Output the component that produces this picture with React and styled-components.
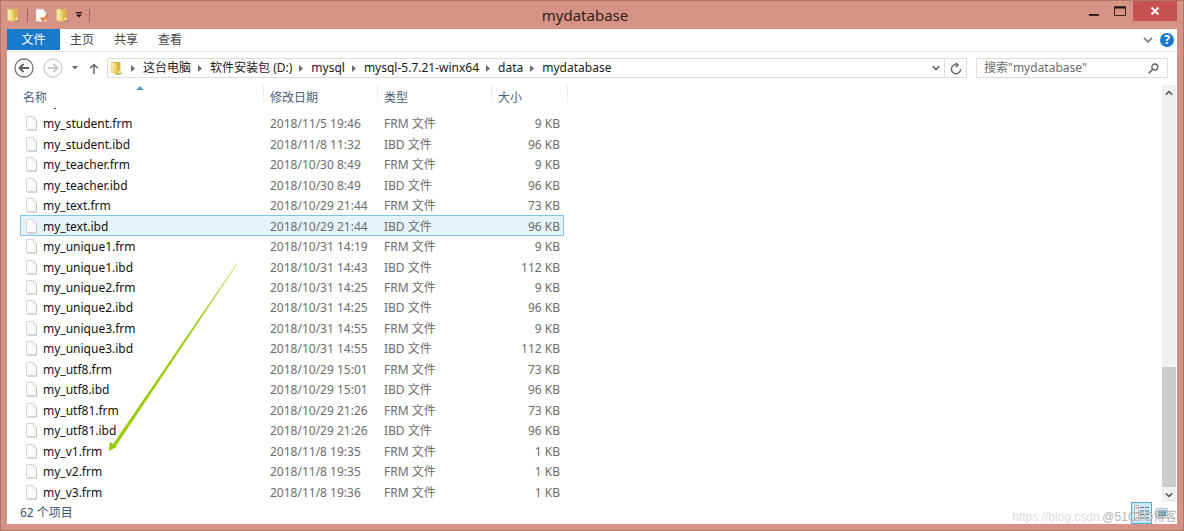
import React from 'react'
import styled, { createGlobalStyle } from 'styled-components'

const files = [
    ['my_student.frm', '2018/11/5 19:46', 'FRM 文件', '9 KB'],
    ['my_student.ibd', '2018/11/8 11:32', 'IBD 文件', '96 KB'],
    ['my_teacher.frm', '2018/10/30 8:49', 'FRM 文件', '9 KB'],
    ['my_teacher.ibd', '2018/10/30 8:49', 'IBD 文件', '96 KB'],
    ['my_text.frm', '2018/10/29 21:44', 'FRM 文件', '73 KB'],
    ['my_text.ibd', '2018/10/29 21:44', 'IBD 文件', '96 KB'],
    ['my_unique1.frm', '2018/10/31 14:19', 'FRM 文件', '9 KB'],
    ['my_unique1.ibd', '2018/10/31 14:43', 'IBD 文件', '112 KB'],
    ['my_unique2.frm', '2018/10/31 14:25', 'FRM 文件', '9 KB'],
    ['my_unique2.ibd', '2018/10/31 14:25', 'IBD 文件', '96 KB'],
    ['my_unique3.frm', '2018/10/31 14:55', 'FRM 文件', '9 KB'],
    ['my_unique3.ibd', '2018/10/31 14:55', 'IBD 文件', '112 KB'],
    ['my_utf8.frm', '2018/10/29 15:01', 'FRM 文件', '73 KB'],
    ['my_utf8.ibd', '2018/10/29 15:01', 'IBD 文件', '96 KB'],
    ['my_utf81.frm', '2018/10/29 21:26', 'FRM 文件', '73 KB'],
    ['my_utf81.ibd', '2018/10/29 21:26', 'IBD 文件', '96 KB'],
    ['my_v1.frm', '2018/11/8 19:35', 'FRM 文件', '1 KB'],
    ['my_v2.frm', '2018/11/8 19:35', 'FRM 文件', '1 KB'],
    ['my_v3.frm', '2018/11/8 19:36', 'FRM 文件', '1 KB'],
]

const crumbs = ['这台电脑', '软件安装包 (D:)', 'mysql', 'mysql-5.7.21-winx64', 'data', 'mydatabase']

const FolderIcon = () => (
    <svg width='13' height='15' viewBox='0 0 13 15' aria-hidden='true'>
        <path d='M8 10l5 2.5-3 1.5H5z' fill='#8a6a50' opacity='0.45' />
        <path d='M5 1h5.5v11.500L7 13.500z' fill='#dcb944' />
        <path d='M0.500 1H5v12.500L.5 12z' fill='#f6e59a' />
        <path d='M4.500 2l3 1.500V14.500l-3-2z' fill='#ecd06a' />
        <path d='M1 1h4l2.500 2.500v10.500' stroke='#cfae50' strokeWidth='0.6' fill='none' />
        <circle cx='9.5' cy='11' r='1.2' fill='#fff2b0' />
    </svg>
)

const CheckPageIcon = () => (
    <svg width='14' height='15' viewBox='0 0 14 15' aria-hidden='true'>
        <path d='M1 1h7l3 3v9.5H1z' fill='#fbfbfb' stroke='#c9b8b4' strokeWidth='0.6' />
        <path d='M8 1v3h3z' fill='#dcdcdc' />
        <path d='M6 9.5l2.2 2.8L12.5 7' stroke='#ee7a3e' strokeWidth='2.2' fill='none' />
    </svg>
)

const FileIcon = () => (
    <svg width='13' height='15' viewBox='0 0 13 15' aria-hidden='true'>
        <path d='M1.500.5h7l3 3.500v10h-10z' fill='#fbfbfb' stroke='#d6d6d6' />
        <path d='M8.500.5V4h3z' fill='#fff' stroke='#d6d6d6' strokeWidth='0.8' />
        <path d='M11.500 5v9h-9' fill='none' stroke='#c2c2c2' />
    </svg>
)

const RoundArrow = ({ color, ring, back }) => (
    <svg width='20' height='20' viewBox='0 0 20 20' fill='none' aria-hidden='true'>
        <circle cx='10' cy='10' r='9' stroke={ring} strokeWidth='1.3' />
        <path d={back ? 'M15 10H6M9.500 6L5.500 10l4 4' : 'M5 10h9M10.500 6l4 4-4 4'} stroke={color} strokeWidth='2' />
    </svg>
)

const Chevron = ({ up, color = '#555', w = 8 }) => (
    <svg width={w} height={w} viewBox='0 0 8 8' fill='none' aria-hidden='true'>
        <path d={up ? 'M.7 5.800L4 2.500l3.300 3.300' : 'M.7 2.200L4 5.500l3.300-3.300'} stroke={color} strokeWidth='1.5' />
    </svg>
)

const App = () => {
    return (
        <Window>
            <GlobalStyle />
            <TitleBar>
                <QuickBar>
                    <FolderIcon />
                    <Divider />
                    <IconButton aria-label='属性'><CheckPageIcon /></IconButton>
                    <IconButton aria-label='新建文件夹'><FolderIcon /></IconButton>
                    <IconButton aria-label='自定义快速访问工具栏'>
                        <svg width='6' height='6' viewBox='0 0 6 6'><path d='M0 0h6v1.200H0zM0 2.500h6l-3 3z' fill='#1d1311' /></svg>
                    </IconButton>
                    <Divider />
                </QuickBar>
                <Title>mydatabase</Title>
                <WindowButtons>
                    <WindowButton aria-label='最小化'>
                        <svg width='12' height='12' viewBox='0 0 12 12'><path d='M1 9h10v1.800H1z' fill='#221412' /></svg>
                    </WindowButton>
                    <WindowButton aria-label='最大化'>
                        <svg width='12' height='12' viewBox='0 0 12 12'>
                            <path d='M.5 2h11v8.500H.5z' fill='none' stroke='#3a2623' />
                            <path d='M0 1.500h12v2H0z' fill='#221412' />
                        </svg>
                    </WindowButton>
                    <WindowButton $close aria-label='关闭'>
                        <svg width='10' height='8' viewBox='0 0 10 8'><path d='M1.500.5l7 7M8.500.5l-7 7' stroke='#fff' strokeWidth='1.900' /></svg>
                    </WindowButton>
                </WindowButtons>
            </TitleBar>

            <Content>
                <Ribbon>
                    <FileTab>文件</FileTab>
                    <Tab>主页</Tab>
                    <Tab>共享</Tab>
                    <Tab>查看</Tab>
                    <RibbonEnd>
                        <IconButton aria-label='展开功能区'><Chevron w={10} color='#8b8b8b' /></IconButton>
                        <HelpButton aria-label='帮助'>?</HelpButton>
                    </RibbonEnd>
                </Ribbon>

                <NavBar>
                    <IconButton aria-label='后退'><RoundArrow back color='#5f5f5f' ring='#6e6e6e' /></IconButton>
                    <IconButton aria-label='前进'><RoundArrow color='#c9c9c9' ring='#cfcfcf' /></IconButton>
                    <IconButton aria-label='最近浏览的位置'>
                        <svg width='6' height='4' viewBox='0 0 6 4'><path d='M0 0h6L3 3.500z' fill='#666' /></svg>
                    </IconButton>
                    <IconButton aria-label='上移'>
                        <svg width='11' height='11' viewBox='0 0 11 11' fill='none'><path d='M7 11V1.500M3.200 5.300L7 1.500l3.800 3.800' stroke='#6a6a6a' strokeWidth='1.500' /></svg>
                    </IconButton>
                    <AddressBox>
                        <FolderIcon />
                        {crumbs.map((crumb) => (
                            <Crumb key={crumb}>
                                <svg width='4' height='7' viewBox='0 0 4 7'><path d='M0 0l4 3.500L0 7z' fill='#6b6b6b' /></svg>
                                <a href='#'>{crumb}</a>
                            </Crumb>
                        ))}
                        <AddressEnd>
                            <IconButton aria-label='以前的位置'><Chevron /></IconButton>
                            <RefreshButton aria-label='刷新'>
                                <svg width='12' height='13' viewBox='0 0 12 13' fill='none'>
                                    <path d='M8 3A4.600 4.600 0 1 0 10.600 7' stroke='#6e6e6e' strokeWidth='1.500' />
                                    <path d='M5.500 0.800l2.800 2.200-2.800 2.200' stroke='#6e6e6e' strokeWidth='1.400' />
                                </svg>
                            </RefreshButton>
                        </AddressEnd>
                    </AddressBox>
                    <SearchBox>
                        <input type='text' aria-label='搜索' placeholder='搜索"mydatabase"' />
                        <svg width='11' height='11' viewBox='0 0 11 11' fill='none'>
                            <circle cx='6.800' cy='4' r='3' stroke='#5c5c5c' strokeWidth='1.300' />
                            <path d='M4.700 6.200L.7 10.200' stroke='#5c5c5c' strokeWidth='1.500' />
                        </svg>
                    </SearchBox>
                </NavBar>

                <Main>
                    <FileTable>
                        <colgroup>
                            <col className='name' />
                            <col className='date' />
                            <col className='type' />
                            <col className='size' />
                            <col />
                        </colgroup>
                        <thead>
                            <tr>
                                <HeadCell>
                                    名称
                                    <SortMark width='8' height='4' viewBox='0 0 8 4'><path d='M0 4l4-4 4 4z' fill='#5d9cc0' /></SortMark>
                                </HeadCell>
                                <HeadCell>修改日期</HeadCell>
                                <HeadCell>类型</HeadCell>
                                <HeadCell colSpan='2'>大小</HeadCell>
                            </tr>
                        </thead>
                        <tbody>
                            {files.map(([name, date, type, size]) => (
                                <Row key={name} $selected={name === 'my_text.ibd'}>
                                    <td><NameCell><FileIcon />{name}</NameCell></td>
                                    <td>{date}</td>
                                    <td>{type}</td>
                                    <td>{size}</td>
                                    <td />
                                </Row>
                            ))}
                        </tbody>
                    </FileTable>
                    <ScrollBar>
                        <ScrollButton aria-label='向上滚动'><Chevron up /></ScrollButton>
                        <Track><Thumb /></Track>
                        <ScrollButton aria-label='向下滚动'><Chevron /></ScrollButton>
                    </ScrollBar>
                    <Pointer width='130' height='190' viewBox='0 0 130 190' aria-hidden='true'>
                        <defs>
                            <linearGradient id='fade' x1='1' y1='0' x2='0' y2='1'>
                                <stop offset='0' stopColor='#99cc00' stopOpacity='0.5' />
                                <stop offset='0.3' stopColor='#99cc00' />
                            </linearGradient>
                        </defs>
                        <path d='M129.600 1.400L7.700 184.200l-2.800-1.900L129 1z' fill='url(#fade)' />
                        <path d='M1.500 188.500l.7-8 6 4z' fill='#99cc00' stroke='#99cc00' />
                    </Pointer>
                </Main>

                <StatusBar>
                    <span>62 个项目</span>
                    <ViewButtons>
                        <ViewButton $active aria-label='详细信息'>
                            <svg width='15' height='16' viewBox='0 0 15 16'>
                                <path d='M.5.5h4v15h-4z' fill='#f4f4f4' stroke='#a8b4ba' strokeWidth='0.800' />
                                <path d='M1.500 2h2v2h-2zM1.500 7h2v2h-2zM1.500 12h2v2h-2z' fill='#d99a84' />
                                <path d='M6 2.500h4M11 2.500h4M6 6h4M11 6h4M6 9.500h4M11 9.500h4M6 13h4M11 13h4' stroke='#61717c' strokeWidth='1.200' />
                            </svg>
                        </ViewButton>
                        <ViewButton aria-label='大图标'>
                            <svg width='13' height='11' viewBox='0 0 13 11'>
                                <path d='M.5.5h11v9H.5z' fill='#eef4fa' stroke='#b3bcc6' />
                                <path d='M2 2h8v6H2z' fill='#58a8e8' />
                                <path d='M2 6l4-2 4 3v1H2z' fill='#3f8a86' />
                            </svg>
                        </ViewButton>
                    </ViewButtons>
                    <SourceMark>https://blog.csdn.</SourceMark>
                    <BlogMark>@51CTO博客</BlogMark>
                </StatusBar>
            </Content>
        </Window>
    )
}

const GlobalStyle = createGlobalStyle`
    *{
        box-sizing:border-box;
    }
    body{
        margin:0;
        font-family:"Noto Sans", "Noto Sans CJK SC", sans-serif;
        font-size:12px;
        line-height:16px;
        color:#1a1a1a;
    }
    button, input{
        font:inherit;
        color:inherit;
        border:none;
        background:transparent;
        padding:0;
        margin:0;
    }
    svg{
        display:block;
        flex-shrink:0;
    }
`

const Window = styled.div`
    min-height:100vh;
    display:flex;
    flex-direction:column;
    padding:0 6px 6px;
    background:#d69385;
    border:1px solid #b0766c;
`

const TitleBar = styled.header`
    display:grid;
    grid-template-columns:1fr auto 1fr;
    height:28px;
`

const QuickBar = styled.div`
    display:flex;
    align-items:center;
    gap:7px;
`

const Divider = styled.span`
    width:1px;
    height:13px;
    background:#8f655d;
`

const Title = styled.h1`
    margin:0;
    padding-right:14px;
    font-size:15px;
    font-weight:400;
    line-height:28px;
    color:#33211e;
`

const WindowButtons = styled.div`
    display:flex;
    justify-content:flex-end;
    align-items:flex-start;
`

const WindowButton = styled.button`
    display:flex;
    align-items:center;
    justify-content:center;
    width:${({ $close }) => ($close ? '44px' : '26px')};
    height:20px;
    background:${({ $close }) => ($close ? '#c75050' : 'transparent')};
`

const IconButton = styled.button`
    display:flex;
    align-items:center;
    justify-content:center;
`

const Content = styled.div`
    flex:1;
    display:flex;
    flex-direction:column;
    background:#fff;
`

const Ribbon = styled.nav`
    display:flex;
    height:23px;
    border-bottom:1px solid #e3e3e3;
`

const Tab = styled.button`
    padding:0 10px;
    color:#444;
`

const FileTab = styled(Tab)`
    width:53px;
    height:21px;
    color:#fff;
    background:#1979ca;
`

const RibbonEnd = styled.div`
    margin-left:auto;
    display:flex;
    align-items:center;
    gap:7px;
    padding-right:3px;
`

const HelpButton = styled.button`
    width:14px;
    height:14px;
    border-radius:50%;
    line-height:14px;
    font-weight:700;
    color:#fff;
    background:#1979ca;
`

const NavBar = styled.div`
    display:flex;
    align-items:center;
    gap:9px;
    padding:6px 9px 6px 7px;
`

const AddressBox = styled.div`
    flex:1;
    display:flex;
    align-items:center;
    height:20px;
    padding-left:2px;
    border:1px solid #dcdcdc;
`

const Crumb = styled.span`
    display:flex;
    align-items:center;
    gap:8px;
    padding-left:7px;
    white-space:nowrap;

    &:first-of-type{
        padding-left:8px;
    }
    a{
        color:#1a1a1a;
        text-decoration:none;
    }
`

const AddressEnd = styled.div`
    margin-left:auto;
    display:flex;
    gap:4px;
    height:100%;
`

const RefreshButton = styled(IconButton)`
    width:22px;
    border-left:1px solid #dcdcdc;
`

const SearchBox = styled.label`
    display:flex;
    align-items:center;
    width:192px;
    height:20px;
    padding:0 8px 0 7px;
    border:1px solid #dcdcdc;

    input{
        flex:1;
        min-width:0;
        outline:none;
    }
    input::placeholder{
        color:#6d6d6d;
        opacity:1;
    }
`

const Main = styled.main`
    position:relative;
    flex:1;
    display:flex;
    justify-content:space-between;
    padding:1px 1px 0 13px;
`

const FileTable = styled.table`
    table-layout:fixed;
    width:548px;
    border-spacing:0;

    .name{
        width:244px;
    }
    .date{
        width:114px;
    }
    .type{
        width:114px;
    }
    .size{
        width:72px;
    }
    td{
        padding:1px 0 0 6px;
        color:#6d6d6d;
        line-height:19px;
        white-space:nowrap;
    }
    td:nth-child(4){
        padding:1px 3px 0 0;
        text-align:right;
    }
    td:last-child{
        padding:0;
    }
`

const HeadCell = styled.th`
    position:relative;
    height:28px;
    padding:0 0 2px 6px;
    text-align:left;
    font-weight:400;
    color:#4c607a;
    background:linear-gradient(#dfeaf5, #f2f7fb) right top / 1px 20px no-repeat;

    &:first-child{
        padding-left:3px;
    }
    /* tail of the row scrolled under the header */
    &:first-child::after{
        content:'';
        position:absolute;
        left:34px;
        bottom:4px;
        width:2px;
        height:1px;
        background:#555;
    }
`

const SortMark = styled.svg`
    position:absolute;
    top:1px;
    left:50%;
    margin-left:-6px;
`

const Row = styled.tr`
    td:not(:last-child){
        background:${({ $selected }) => ($selected ? '#e5f3fb' : 'transparent')};
        box-shadow:${({ $selected }) => ($selected ? 'inset 0 1px #7fc4e4, inset 0 -1px #7fc4e4' : 'none')};
    }
    td:first-child{
        border-left:1px solid ${({ $selected }) => ($selected ? '#7fc4e4' : 'transparent')};
        padding-left:4px;
    }
    td:nth-child(4){
        border-right:1px solid ${({ $selected }) => ($selected ? '#7fc4e4' : 'transparent')};
    }
`

const NameCell = styled.span`
    display:flex;
    align-items:center;
    gap:5px;
    color:#111;
`

const ScrollBar = styled.div`
    display:flex;
    flex-direction:column;
    width:14px;
    background:#f0f0f0;
`

const ScrollButton = styled(IconButton)`
    height:15px;
`

const Track = styled.div`
    flex:1;
    display:flex;
    align-items:flex-end;
`

const Thumb = styled.div`
    width:100%;
    height:31%;
    background:#cdcdcd;
`

const Pointer = styled.svg`
    position:absolute;
    left:101px;
    bottom:50px;
    pointer-events:none;
`

const StatusBar = styled.footer`
    position:relative;
    display:flex;
    align-items:center;
    justify-content:space-between;
    height:22px;
    padding:0 4px 0 13px;
    color:#3f5670;
`

const ViewButtons = styled.div`
    display:flex;
`

const ViewButton = styled(IconButton)`
    width:21px;
    height:22px;
    border:1px solid ${({ $active }) => ($active ? '#4fb0de' : 'transparent')};
    background:${({ $active }) => ($active ? '#cbe8f6' : 'transparent')};
`

const Mark = styled.span`
    position:absolute;
    bottom:0;
    line-height:14px;
    font-family:"Liberation Sans", "Noto Sans CJK SC", sans-serif;
`

const SourceMark = styled(Mark)`
    right:74px;
    color:#dcdcdc;
`

const BlogMark = styled(Mark)`
    right:0;
    color:#b4b4b4;
`

export default App
